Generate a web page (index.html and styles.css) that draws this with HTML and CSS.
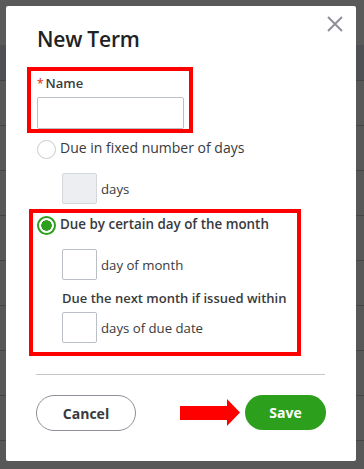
FILE: index.html
```html
<!DOCTYPE html>
<html lang="en">
<head>
<meta charset="utf-8">
<title>New Term</title>
<link rel="stylesheet" href="styles.css">
</head>
<body>
<div class="backdrop">
  <div class="modal">
    <button class="close" aria-label="Close">
      <svg width="16" height="16" viewBox="0 0 16 16"><path d="M1 1L15 15M15 1L1 15" stroke="#8d9096" stroke-width="2" fill="none"/></svg>
    </button>
    <h1 class="title">New Term</h1>
    <div class="name-field">
      <label class="label"><span class="req">*</span>Name</label>
      <div class="text-input"></div>
    </div>
    <div class="radio-row">
      <span class="radio"></span>
      <span class="radio-text">Due in fixed number of days</span>
    </div>
    <div class="sub-row first">
      <span class="small-input disabled"></span>
      <span class="sub-text">days</span>
    </div>
    <div class="radio-row second">
      <span class="radio checked"></span>
      <span class="radio-text strong">Due by certain day of the month</span>
    </div>
    <div class="sub-row first">
      <span class="small-input"></span>
      <span class="sub-text">day of month</span>
    </div>
    <div class="sub-label">Due the next month if issued within</div>
    <div class="sub-row tight">
      <span class="small-input"></span>
      <span class="sub-text">days of due date</span>
    </div>
    <div class="divider"></div>
    <div class="footer">
      <button class="btn btn-cancel">Cancel</button>
      <button class="btn btn-save">Save</button>
    </div>

    <div class="annot box-name"></div>
    <div class="annot box-month"></div>
    <svg class="arrow" width="60" height="27" viewBox="0 0 60 27"><path d="M0 7H47V0L60 13.5L47 27V21H0Z" fill="#ff0000"/></svg>
  </div>
</div>
</body>
</html>
```
FILE: styles.css
```css
* { box-sizing: border-box; }
html, body { margin: 0; padding: 0; }
body {
  width: 364px;
  height: 469px;
  overflow: hidden;
  font-family: "Open Sans", "Lato", sans-serif;
  color: #393a3d;
}
.backdrop {
  width: 364px;
  height: 469px;
  padding: 6px 8px 8px 6px;
  background:
    linear-gradient(to bottom, #5a5a5a 0 45px, #4f5053 45px 80px, transparent 80px) 0 0 / 100% 80px no-repeat,
    repeating-linear-gradient(to bottom, #585858 0 44px, #454545 44px 45px) 0 36px;
  background-color: #585858;
}
.modal {
  position: relative;
  width: 350px;
  height: 455px;
  background: #fff;
  border-radius: 2px;
  padding: 21px 30px 0 30px;
  display: flex;
  flex-direction: column;
}
.close {
  position: absolute;
  top: 10px;
  right: 13px;
  width: 16px;
  height: 16px;
  padding: 0;
  border: 0;
  background: none;
  display: block;
}
.close svg { display: block; }
.title {
  margin: 0;
  font-size: 21px;
  line-height: 24px;
  font-weight: 600;
  color: #212224;
  padding-left: 1px;
  letter-spacing: -0.2px;
}
.name-field {
  margin-top: 23px;
  padding-left: 1px;
  display: flex;
  flex-direction: column;
  gap: 4px;
}
.label {
  font-size: 13px;
  line-height: 18px;
  font-weight: 600;
}
.req { color: #e0452b; margin-right: 2px; font-size: 12px; }
.text-input {
  width: 147px;
  height: 32px;
  border: 1px solid #babec5;
  border-radius: 2px;
  background: #fff;
}
.radio-row {
  margin-top: 9px;
  height: 20px;
  display: flex;
  align-items: center;
  gap: 4px;
  padding-left: 1px;
}
.radio-row.second { margin-top: 10px; }
.radio {
  width: 19px;
  height: 19px;
  border-radius: 50%;
  border: 1px solid #c9cacc;
  flex: none;
  margin-top: 2px;
}
.radio.checked {
  border: 2px solid #2ca01c;
  background: radial-gradient(circle, #2ca01c 0 5px, #fff 5.5px);
}
.radio-text { font-size: 14px; line-height: 18px; }
.radio-text.strong { font-weight: 600; font-size: 13.4px; }
.sub-row {
  display: flex;
  align-items: center;
  gap: 4px;
  padding-left: 26px;
}
.sub-row.first { margin-top: 15px; }
.sub-row.tight { margin-top: 5px; }
.small-input {
  width: 35px;
  height: 31px;
  border: 1px solid #babec5;
  border-radius: 2px;
  background: #fff;
}
.small-input.disabled {
  background: #eceef1;
  border-color: #d4d7dc;
}
.sub-text { font-size: 13.2px; line-height: 18px; color: #393a3d; }
.sub-label {
  margin-top: 9px;
  padding-left: 26px;
  font-size: 13px;
  line-height: 18px;
  font-weight: 600;
}
.divider {
  margin-top: 31px;
  height: 1px;
  background: #c6c7c9;
  margin-right: 1px;
}
.footer {
  margin-top: 20px;
  display: flex;
  justify-content: space-between;
  align-items: flex-start;
}
.btn {
  font-family: inherit;
  font-size: 14px;
  font-weight: 700;
  border-radius: 18px;
  padding: 0;
}
.btn-cancel {
  width: 100px;
  height: 36px;
  background: #fff;
  border: 1px solid #8d9096;
  color: #393a3d;
}
.btn-save {
  width: 81px;
  height: 35px;
  background: #2ca01c;
  border: 0;
  color: #fff;
}
.annot {
  position: absolute;
  border: 4px solid #ff0000;
}
.box-name { left: 21px; top: 61px; width: 166px; height: 66px; }
.box-month { left: 23px; top: 203px; width: 272px; height: 147px; }
.arrow { position: absolute; left: 174px; top: 393px; }
```
